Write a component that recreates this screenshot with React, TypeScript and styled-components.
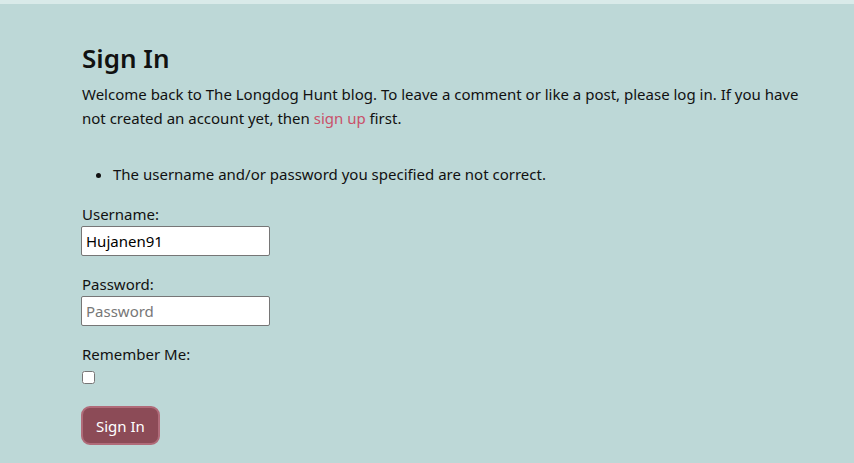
import React from "react";
import styled, { createGlobalStyle } from "styled-components";

const Global = createGlobalStyle`
  html, body { margin: 0; padding: 0; }
  body {
    background: #bdd8d7;
    font-family: "Noto Sans", "Open Sans", sans-serif;
    color: #111;
    min-height: 463px;
  }
`;

const TopBar = styled.div`
  height: 4px;
  background: #d9eae9;
`;

const Container = styled.main`
  padding: 36px 40px 20px 82px;
  max-width: 736px;
`;

const Title = styled.h1`
  margin: 0 0 6px;
  font-size: 26px;
  font-weight: 600;
  line-height: 36px;
`;

const Intro = styled.p`
  margin: 0;
  font-size: 15px;
  line-height: 24px;
`;

const Link = styled.a`
  color: #c9516a;
  text-decoration: none;
`;

const Errors = styled.ul`
  margin: 32px 0 16px;
  padding-left: 31px;
  font-size: 15px;
  line-height: 24px;
`;

const Form = styled.form`
  display: flex;
  flex-direction: column;
  gap: 16px;
`;

const Field = styled.div`
  display: flex;
  flex-direction: column;
  align-items: flex-start;
`;

const Label = styled.label`
  font-size: 15px;
  line-height: 24px;
`;

const Input = styled.input`
  box-sizing: border-box;
  width: 189px;
  height: 30px;
  margin-left: -1px;
  padding: 1px 4px;
  border: 1px solid #767676;
  border-radius: 2px;
  background: #fff;
  font-family: inherit;
  font-size: 15px;
  color: #000;
  &::placeholder { color: #777; }
`;

const Check = styled.input`
  width: 13px;
  height: 13px;
  margin: 5px 0 0 0;
`;

const Button = styled.button`
  align-self: flex-start;
  margin-top: 6px;
  margin-left: -1px;
  padding: 0 13px;
  height: 39px;
  border: 2px solid #b06b79;
  border-radius: 9px;
  background: #8c4b57;
  color: #fff;
  font-family: inherit;
  font-size: 15px;
`;

export default function App() {
  return (
    <>
      <Global />
      <TopBar />
      <Container>
        <Title>Sign In</Title>
        <Intro>
          Welcome back to The Longdog Hunt blog. To leave a comment or like a post, please log in. If you have
          not created an account yet, then <Link href="#">sign up</Link> first.
        </Intro>
        <Errors>
          <li>The username and/or password you specified are not correct.</li>
        </Errors>
        <Form onSubmit={(e) => e.preventDefault()}>
          <Field>
            <Label htmlFor="u">Username:</Label>
            <Input id="u" defaultValue="Hujanen91" />
          </Field>
          <Field>
            <Label htmlFor="p">Password:</Label>
            <Input id="p" type="password" placeholder="Password" />
          </Field>
          <Field>
            <Label htmlFor="r">Remember Me:</Label>
            <Check id="r" type="checkbox" />
          </Field>
          <Button type="submit">Sign In</Button>
        </Form>
      </Container>
    </>
  );
}
